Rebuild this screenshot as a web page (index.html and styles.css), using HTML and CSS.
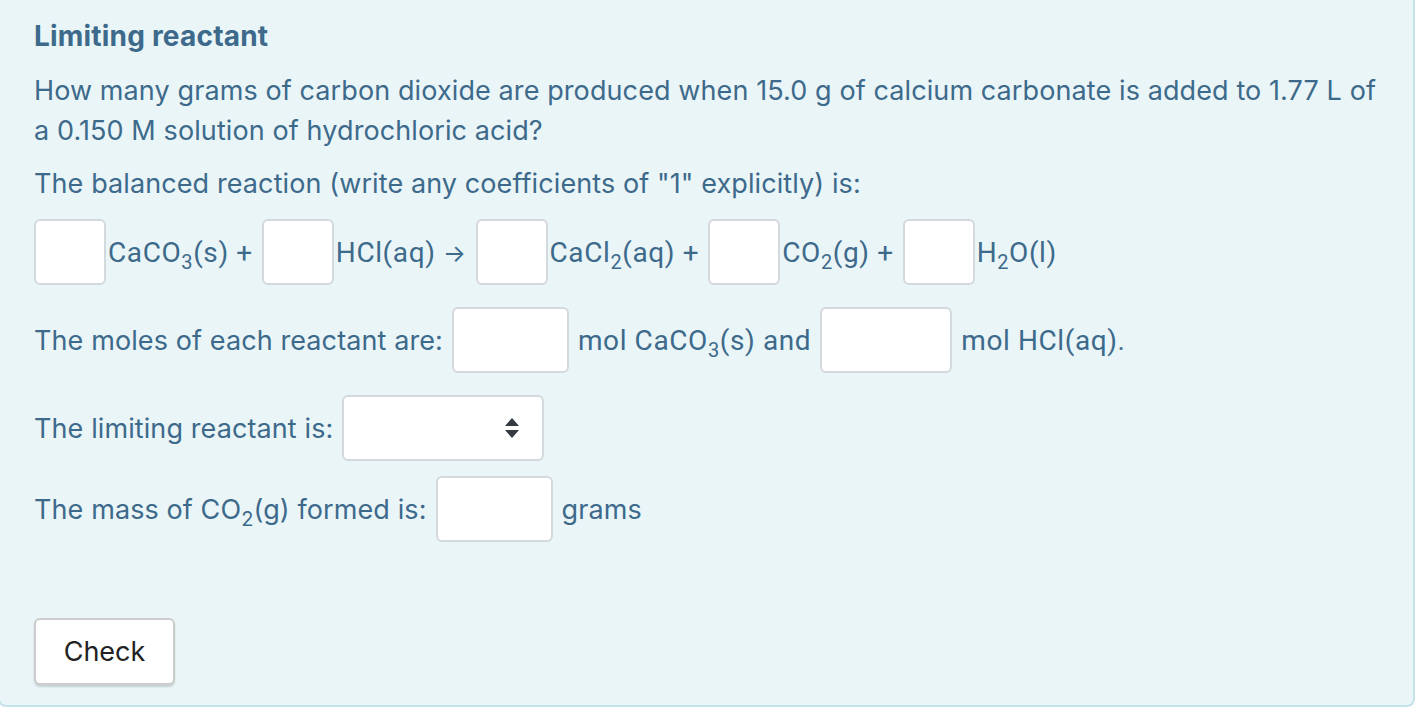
FILE: index.html
```html
<!DOCTYPE html>
<html>
<head>
<meta charset="utf-8">
<link rel="stylesheet" href="styles.css">
</head>
<body>
<div class="panel">
  <h1 class="title">Limiting reactant</h1>
  <p class="question">How many grams of carbon dioxide are produced when 15.0 g of calcium carbonate is added to 1.77 L of a 0.150 M solution of hydrochloric acid?</p>
  <p class="line">The balanced reaction (write any coefficients of "1" explicitly) is:</p>
  <div class="row eq">
    <span class="box coef"></span><span class="chem">CaCO<sub>3</sub>(s) +</span>
    <span class="box coef"></span><span class="chem">HCl(aq) <span class="arrow">→</span></span>
    <span class="box coef"></span><span class="chem">CaCl<sub>2</sub>(aq) +</span>
    <span class="box coef"></span><span class="chem">CO<sub>2</sub>(g) +</span>
    <span class="box coef"></span><span class="chem">H<sub>2</sub>O(l)</span>
  </div>
  <div class="row r2">
    <span class="txt">The moles of each reactant are:</span>
    <span class="box w116"></span>
    <span class="chem">mol CaCO<sub>3</sub>(s) and</span>
    <span class="box w131"></span>
    <span class="chem">mol HCl(aq).</span>
  </div>
  <div class="row r3">
    <span class="txt">The limiting reactant is:</span>
    <span class="box select">
      <svg width="16" height="22" viewBox="0 0 16 22"><path d="M8 1 L15 9 H1 Z M1 13 H15 L8 21 Z" fill="#343a40"/></svg>
    </span>
  </div>
  <div class="row r4">
    <span class="txt">The mass of CO<sub>2</sub>(g) formed is:</span>
    <span class="box w116"></span>
    <span class="txt">grams</span>
  </div>
  <button class="check">Check</button>
</div>
</body>
</html>
```
FILE: styles.css
```css
html, body {
  margin: 0;
  padding: 0;
  background: #ffffff;
}
.panel {
  box-sizing: border-box;
  width: 1417px;
  height: 707px;
  margin-left: -2px;
  background: #eaf5f8;
  border: 2px solid #c4e2ea;
  border-top: none;
  border-radius: 0 0 8px 8px;
  padding: 20px 0 0 34px;
  color: #3d6a8b;
  font-family: Inter, "Noto Sans", sans-serif;
  font-size: 27px;
  letter-spacing: 0.1px;
}
.title {
  margin: 0;
  font-size: 28px;
  font-weight: 700;
  line-height: 32px;
  letter-spacing: 0.2px;
}
.question {
  margin: 19px 0 0 0;
  line-height: 40px;
  width: 1360px;
}
.line {
  margin: 13px 0 0 0;
  line-height: 40px;
}
.row {
  display: flex;
  align-items: center;
}
.eq { margin-top: 15px; }
.r2 { margin-top: 22px; }
.r3 { margin-top: 22px; }
.r4 { margin-top: 15px; }
.box {
  box-sizing: border-box;
  display: inline-flex;
  align-items: center;
  justify-content: flex-end;
  height: 66px;
  background: #ffffff;
  border: 2px solid #d3d9dd;
  border-radius: 6px;
}
.coef { width: 72px; }
.w116 { width: 117px; margin: 0 9px; }
.w131 { width: 132px; margin: 0 9px; }
.select { width: 202px; margin-left: 9px; padding-right: 22px; }
.chem {
  font-family: Roboto, sans-serif;
  font-size: 28px;
  letter-spacing: 0.6px;
  white-space: pre;
}
.eq .chem { margin: 0 9px 0 2px; }
.arrow {
  font-family: Inter, sans-serif;
  font-size: 24px;
}
sub {
  font-size: 20px;
  vertical-align: -7px;
  line-height: 0;
}
.txt { white-space: pre; }
.check {
  display: block;
  margin-top: 76px;
  width: 141px;
  height: 67px;
  background: #ffffff;
  border: 2px solid #cccccc;
  border-radius: 6px;
  box-shadow: 0 2px 2px rgba(0,0,0,0.15);
  font-family: Inter, sans-serif;
  font-size: 27px;
  color: #222222;
}
```
